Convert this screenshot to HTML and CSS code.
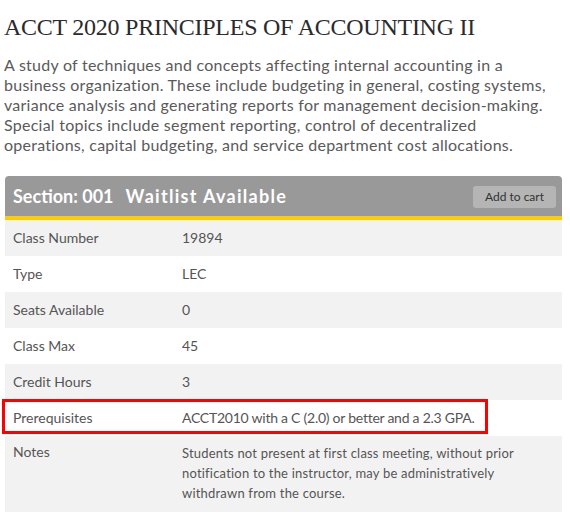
FILE: index.html
```html
<!DOCTYPE html>
<html>
<head>
<meta charset="utf-8">
<link rel="stylesheet" href="styles.css">
</head>
<body>
<div class="page">
  <h1 class="title">ACCT 2020 PRINCIPLES OF ACCOUNTING II</h1>
  <p class="desc">A study of techniques and concepts affecting internal accounting in a<br>business organization. These include budgeting in general, costing systems,<br>variance analysis and generating reports for management decision-making.<br>Special topics include segment reporting, control of decentralized<br>operations, capital budgeting, and service department cost allocations.</p>
  <div class="section">
    <div class="section-head">
      <div class="section-title">Section: 001<span class="gap"></span><span class="wait">Waitlist Available</span></div>
      <button class="cart">Add to cart</button>
    </div>
    <div class="row alt"><div class="label">Class Number</div><div class="value">19894</div></div>
    <div class="row"><div class="label">Type</div><div class="value">LEC</div></div>
    <div class="row alt"><div class="label">Seats Available</div><div class="value">0</div></div>
    <div class="row"><div class="label">Class Max</div><div class="value">45</div></div>
    <div class="row alt"><div class="label">Credit Hours</div><div class="value">3</div></div>
    <div class="row highlight"><div class="label">Prerequisites</div><div class="value tight">ACCT2010 with a C (2.0) or better and a 2.3 GPA.</div><div class="mark"></div></div>
    <div class="row alt notes"><div class="label">Notes</div><div class="value small">Students not present at first class meeting, without prior notification to the instructor, may be administratively withdrawn from the course.</div></div>
  </div>
</div>
</body>
</html>
```
FILE: styles.css
```css
* { box-sizing: border-box; }
html, body { margin: 0; padding: 0; background: #fff; }
.page { padding: 0 8px 0 4px; font-family: "Lato", "Liberation Sans", sans-serif; color: #555; }
.title {
  font-family: "Liberation Serif", serif;
  font-weight: normal;
  font-size: 24px;
  line-height: 30px;
  color: #2b2b2b;
  margin: 12px 0 0 0;
  letter-spacing: -0.25px;
}
.desc {
  margin: 13px 0 0 0;
  font-size: 16px;
  line-height: 20px;
  color: #5a5a5a;
  letter-spacing: 0.25px;
  white-space: nowrap;
}
.section { margin: 21px 0 0 1px; width: 557px; }
.section-head {
  height: 44px;
  background: #999;
  border-bottom: 4px solid #fc0;
  border-radius: 4px 4px 0 0;
  display: flex;
  align-items: center;
  justify-content: space-between;
  padding: 0 6px 0 8px;
}
.section-title { color: #fff; font-weight: bold; font-size: 18px; }
.gap { display: inline-block; width: 12px; }
.wait { letter-spacing: 1.3px; }
.cart {
  font-family: inherit;
  font-size: 12px;
  color: #333;
  background: #b5b5b5;
  border: none;
  border-radius: 3px;
  height: 22px;
  width: 83px;
  padding: 0;
  margin-top: 1px;
}
.row { display: flex; height: 36px; align-items: center; font-size: 14px; position: relative; padding-bottom: 2px; }
.row.alt { background: #f2f2f2; }
.label { width: 177px; padding-left: 8px; color: #555; }
.value { flex: 1; color: #555; }
.tight { letter-spacing: -0.25px; }
.notes { height: 76px; align-items: flex-start; padding-top: 7px; }
.small { font-size: 13px; line-height: 20px; padding-right: 40px; letter-spacing: 0.2px; }
.mark {
  position: absolute;
  left: -3px; top: -1px;
  width: 486px; height: 35px;
  border: 3.5px solid #f00;
}
```
